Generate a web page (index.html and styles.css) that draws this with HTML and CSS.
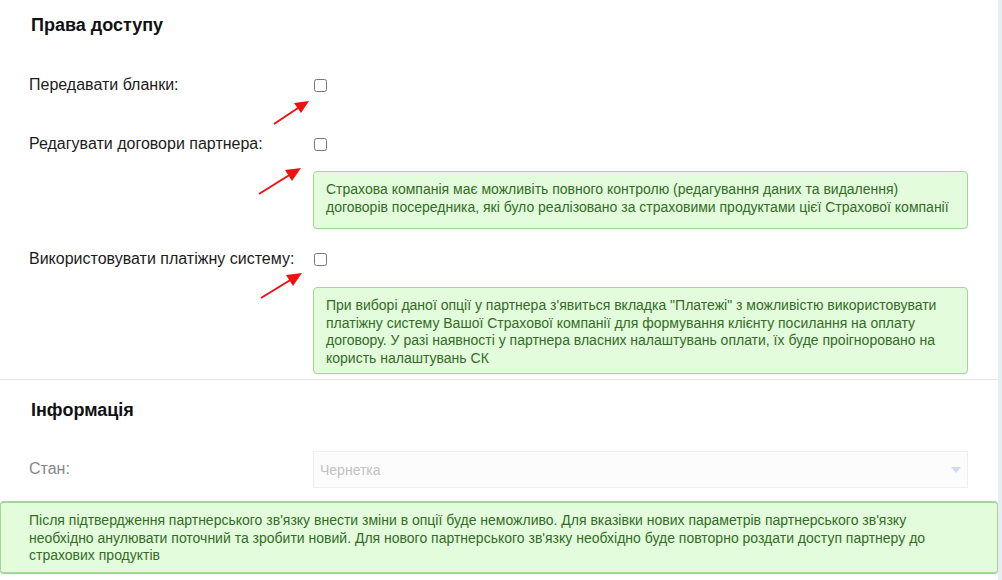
FILE: index.html
```html
<!DOCTYPE html>
<html lang="uk">
<head>
    <meta charset="UTF-8">
    <meta name="viewport" content="width=device-width, initial-scale=1.0">
    <title>Партнер</title>
    <link rel="stylesheet" href="styles.css">
</head>
<body>
    <div class="panel">
        <section class="section section-access">
            <h3 class="section-title">Права доступу</h3>

            <div class="form-row row-plain">
                <label class="row-label" for="blanks">Передавати бланки:</label>
                <div class="row-control">
                    <input type="checkbox" id="blanks">
                    <svg class="arrow arrow-1" width="44" height="34" viewBox="0 0 44 34">
                        <line x1="3" y1="31" x2="30" y2="13" stroke="#f01010" stroke-width="2"/>
                        <polygon points="38,8 23,10 30,20" fill="#f01010"/>
                    </svg>
                </div>
            </div>

            <div class="form-row">
                <label class="row-label" for="contracts">Редагувати договори партнера:</label>
                <div class="row-control">
                    <input type="checkbox" id="contracts">
                    <svg class="arrow arrow-2" width="50" height="34" viewBox="0 0 50 34">
                        <line x1="3" y1="31" x2="35" y2="11" stroke="#f01010" stroke-width="2"/>
                        <polygon points="45,5 29,7 36,18" fill="#f01010"/>
                    </svg>
                    <div class="hint hint-contracts">Страхова компанія має можливіть повного контролю (редагування даних та видалення) договорів посередника, які було реалізовано за страховими продуктами цієї Страхової компанії</div>
                </div>
            </div>

            <div class="form-row row-last">
                <label class="row-label" for="payments">Використовувати платіжну систему:</label>
                <div class="row-control">
                    <input type="checkbox" id="payments">
                    <svg class="arrow arrow-3" width="48" height="32" viewBox="0 0 48 32">
                        <line x1="3" y1="29" x2="34" y2="10" stroke="#f01010" stroke-width="2"/>
                        <polygon points="44,4 28,6 35,17" fill="#f01010"/>
                    </svg>
                    <div class="hint hint-payments">При виборі даної опції у партнера з'явиться вкладка "Платежі" з можливістю використовувати платіжну систему Вашої Страхової компанії для формування клієнту посилання на оплату договору. У разі наявності у партнера власних налаштувань оплати, їх буде проігноровано на користь налаштувань СК</div>
                </div>
            </div>
        </section>

        <section class="section section-info">
            <h3 class="section-title">Інформація</h3>

            <div class="form-row row-select">
                <label class="row-label muted" for="state">Стан:</label>
                <div class="row-control">
                    <div class="select-box">
                        <select id="state" disabled>
                            <option>Чернетка</option>
                        </select>
                        <svg class="caret" width="10" height="6" viewBox="0 0 10 6">
                            <polygon points="0,0 10,0 5,6" fill="#c9dcf0"/>
                        </svg>
                    </div>
                </div>
            </div>
        </section>

        <div class="hint hint-wide">Після підтвердження партнерського зв'язку внести зміни в опції буде неможливо. Для вказівки нових параметрів партнерського зв'язку необхідно анулювати поточний та зробити новий. Для нового партнерського зв'язку необхідно буде повторно роздати доступ партнеру до страхових продуктів</div>
    </div>
</body>
</html>
```

FILE: styles.css
```css
body {
    margin: 0;
    background-color: #e7eef3;
    font-family: 'Liberation Sans', Arial, sans-serif;
    color: #1c1c1c;
    overflow: hidden;
}
.panel {
    width: 998px;
    min-height: 580px;
    background-color: #fff;
}
.section {
    padding: 0 30px 0 29px;
}
.section-access {
    padding-top: 15px;
    padding-bottom: 5px;
}
.section-info {
    border-top: 1px solid #e4e4e4;
    padding-top: 20px;
}
.section-title {
    margin: 0 0 0 2px;
    font-size: 18px;
    line-height: 20px;
    font-weight: bold;
    color: #111;
}
.section-access .section-title {
    margin-bottom: 40px;
}
.section-info .section-title {
    margin-bottom: 31px;
}
.form-row {
    display: flex;
    padding-bottom: 20px;
}
.row-plain {
    padding-bottom: 39px;
}
.row-last {
    padding-bottom: 0;
}
.row-label {
    width: 284px;
    flex-shrink: 0;
    font-size: 16px;
    line-height: 20px;
}
.row-label.muted {
    color: #888;
    line-height: 36px;
}
.row-control {
    flex: 1;
    position: relative;
}
.row-control input[type="checkbox"] {
    display: block;
    width: 13px;
    height: 13px;
    margin: 4px 0 3px 1px;
}
.arrow {
    position: absolute;
}
.arrow-1 {
    left: -42px;
    top: 18px;
}
.arrow-2 {
    left: -57px;
    top: 29px;
}
.arrow-3 {
    left: -55px;
    top: 20px;
}
.hint {
    margin-top: 20px;
    padding: 9px 12px 7px;
    background-color: #e2fcdc;
    border: 1px solid #a6d49d;
    border-radius: 4px;
    color: #356b27;
    font-size: 14px;
    line-height: 17.5px;
    box-shadow: 0 1px 1px rgba(0, 0, 0, 0.05);
}
.hint-contracts {
    padding-bottom: 12px;
}
.hint-payments {
    margin-top: 21px;
    padding-bottom: 6px;
}
.hint-wide {
    margin-top: 13px;
    padding: 9px 28px 7px;
    border-width: 2px 1px 2px 1px;
}
.row-select {
    padding-bottom: 0;
}
.select-box {
    position: relative;
}
.select-box select {
    display: block;
    width: 100%;
    height: 37px;
    padding: 0 6px;
    appearance: none;
    background-color: #fcfcfc;
    border: 1px solid #efefef;
    border-radius: 0;
    font-family: 'Liberation Sans', Arial, sans-serif;
    font-size: 14px;
    color: #c2c2c2;
    opacity: 1;
}
.caret {
    position: absolute;
    right: 7px;
    top: 16px;
}
```
